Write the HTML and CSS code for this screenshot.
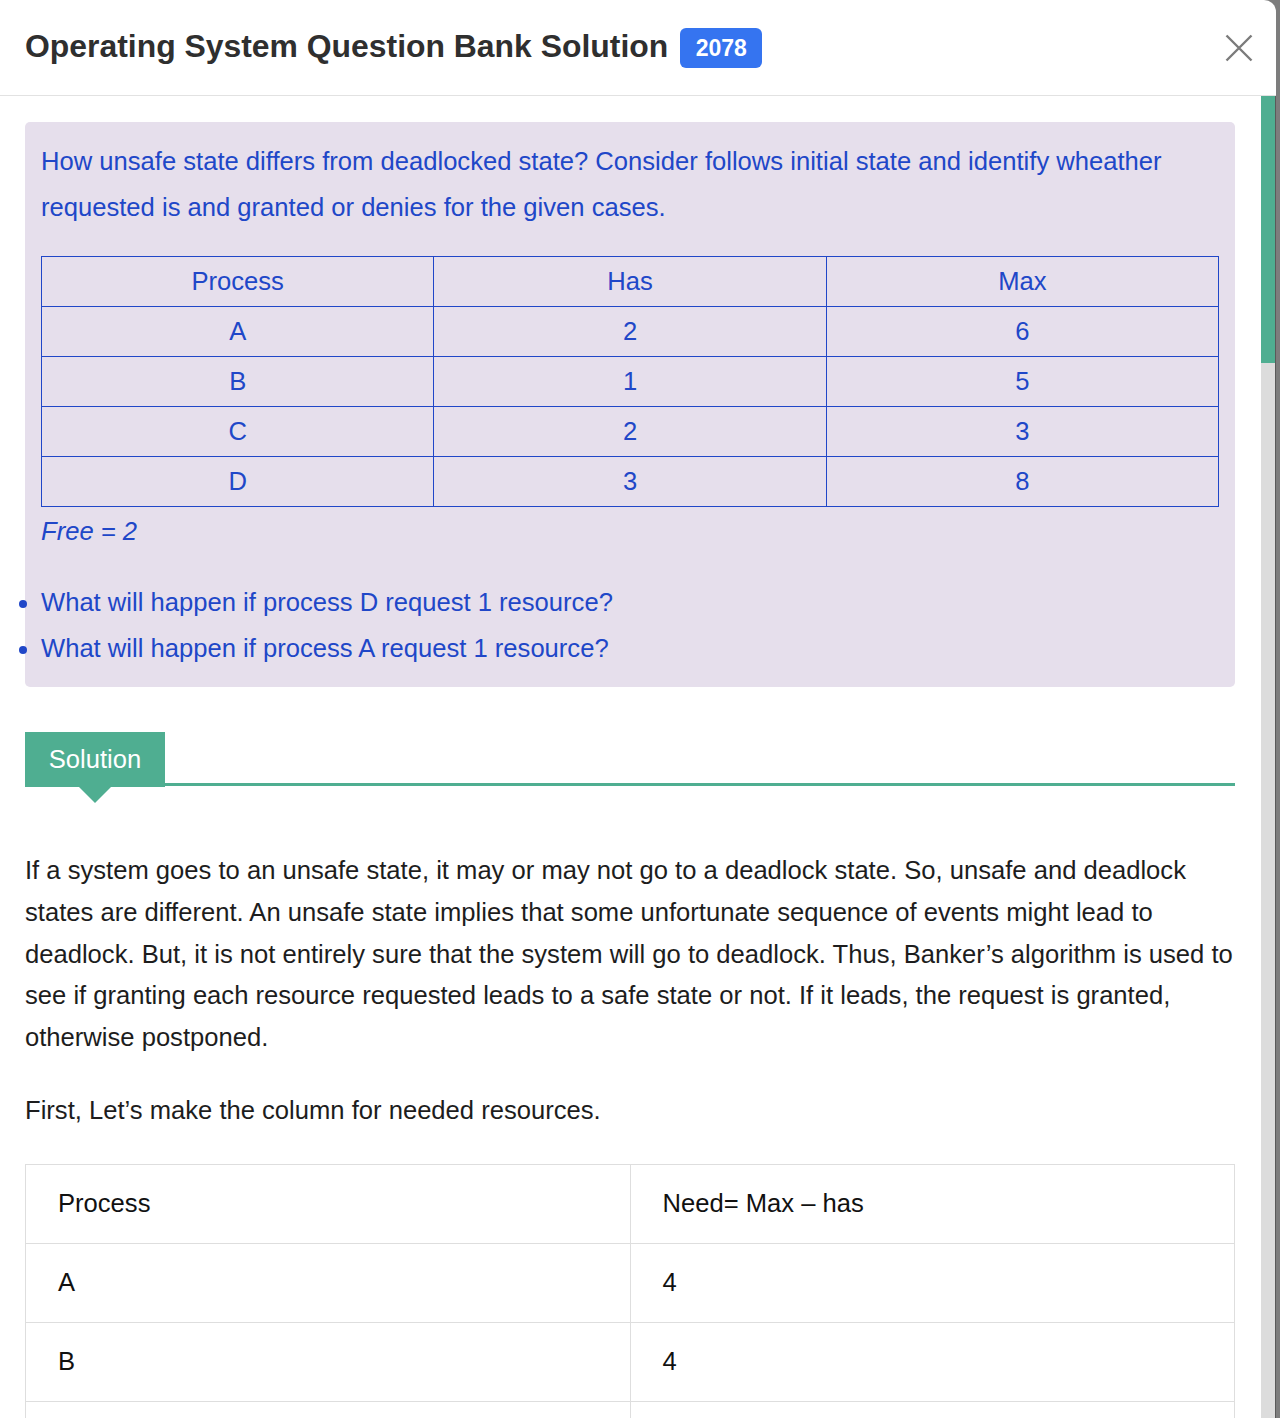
FILE: index.html
```html
<!DOCTYPE html>
<html lang="en">
<head>
<meta charset="utf-8">
<title>Operating System Question Bank Solution</title>
<link rel="stylesheet" href="styles.css">
</head>
<body>
<div class="modal">
  <header class="modal-header">
    <h1 class="title">Operating System Question Bank Solution <span class="badge">2078</span></h1>
    <button class="close" aria-label="Close">
      <svg width="28" height="28" viewBox="0 0 28 28"><path d="M1.5 1.5L26.5 26.5M26.5 1.5L1.5 26.5" stroke="#7b7b7b" stroke-width="2.4" fill="none"/></svg>
    </button>
  </header>
  <div class="modal-body">
    <div class="content">
      <div class="question">
        <p class="q-text">How unsafe state differs from deadlocked state? Consider follows initial state and identify wheather requested is and granted or denies for the given cases.</p>
        <table class="q-table">
          <tr><td>Process</td><td>Has</td><td>Max</td></tr>
          <tr><td>A</td><td>2</td><td>6</td></tr>
          <tr><td>B</td><td>1</td><td>5</td></tr>
          <tr><td>C</td><td>2</td><td>3</td></tr>
          <tr><td>D</td><td>3</td><td>8</td></tr>
        </table>
        <p class="free"><em>Free = 2</em></p>
        <ul class="q-list">
          <li>What will happen if process D request 1 resource?</li>
          <li>What will happen if process A request 1 resource?</li>
        </ul>
      </div>
      <div class="sol-head"><span class="sol-tab">Solution</span><span class="sol-line"></span></div>
      <p class="answer first">If a system goes to an unsafe state, it may or may not go to a deadlock state. So, unsafe and deadlock states are different. An unsafe state implies that some unfortunate sequence of events might lead to deadlock. But, it is not entirely sure that the system will go to deadlock. Thus, Banker’s algorithm is used to see if granting each resource requested leads to a safe state or not. If it leads, the request is granted, otherwise postponed.</p>
      <p class="answer">First, Let’s make the column for needed resources.</p>
      <table class="need">
        <tr><td>Process</td><td>Need= Max – has</td></tr>
        <tr><td>A</td><td>4</td></tr>
        <tr><td>B</td><td>4</td></tr>
        <tr><td>C</td><td>1</td></tr>
        <tr><td>D</td><td>5</td></tr>
      </table>
    </div>
    <div class="scrollbar"><div class="thumb"></div></div>
  </div>
</div>
</body>
</html>
```
FILE: styles.css
```css
html, body {
  margin: 0;
  height: 100%;
}
body {
  background: #7d7d7d;
  font-family: "Liberation Sans", Arial, Helvetica, sans-serif;
  overflow: hidden;
}
.modal {
  width: 1276px;
  height: 1418px;
  background: #fff;
  border-top-right-radius: 12px;
  display: flex;
  flex-direction: column;
  overflow: hidden;
}
.modal-header {
  height: 92px;
  flex-shrink: 0;
  border-bottom: 1px solid #e2e2e2;
  display: flex;
  align-items: center;
  justify-content: space-between;
  padding: 0 23px 3px 25px;
}
.title {
  margin: 0;
  font-size: 31.9px;
  font-weight: 700;
  color: #2f2f2f;
  display: flex;
  align-items: center;
  gap: 12px;
}
.badge {
  background: #3574f0;
  color: #fff;
  font-size: 23px;
  font-weight: 700;
  height: 40px;
  padding: 0 15.5px;
  border-radius: 6px;
  display: inline-flex;
  align-items: center;
  margin-top: 4px;
}
.close {
  background: none;
  border: 0;
  padding: 0;
  width: 28px;
  height: 28px;
  cursor: pointer;
  margin-top: 3px;
}
.close svg {
  display: block;
}
.modal-body {
  flex: 1;
  min-height: 0;
  display: flex;
}
.content {
  flex: 1;
  padding: 26px 26px 0 25px;
  overflow: hidden;
}
.scrollbar {
  width: 14px;
  flex-shrink: 0;
  background: #dcdcdc;
  border-right: 1px solid #5a5a5a;
}
.thumb {
  height: 267px;
  background: #4fae91;
}
.question {
  background: #e6dfec;
  border-radius: 5px;
  padding: 16px;
  color: #2047c8;
  font-size: 25.6px;
  line-height: 46px;
}
.q-text {
  margin: 0 0 26px;
}
.q-table {
  width: 100%;
  border-collapse: collapse;
  table-layout: fixed;
}
.q-table tr {
  height: 50px;
}
.q-table td {
  border: 1px solid #2047c8;
  text-align: center;
  padding: 0;
  line-height: 1.2;
}
.free {
  margin: 1px 0 0;
}
.q-list {
  margin: 25px 0 0;
  padding: 0;
  list-style: disc outside;
}
.sol-head {
  display: flex;
  align-items: flex-end;
  margin-top: 45px;
}
.sol-tab {
  position: relative;
  width: 140px;
  height: 55px;
  background: #4fae91;
  color: #fff;
  font-size: 25.6px;
  display: flex;
  align-items: center;
  justify-content: center;
}
.sol-tab::after {
  content: "";
  position: absolute;
  left: 50%;
  top: 100%;
  transform: translateX(-50%);
  border-left: 16px solid transparent;
  border-right: 16px solid transparent;
  border-top: 16px solid #4fae91;
}
.sol-line {
  flex: 1;
  height: 3px;
  margin-bottom: 1px;
  background: #4fae91;
}
.answer {
  font-size: 25.6px;
  line-height: 41.75px;
  color: #1d1d1d;
  margin: 0 0 32px;
}
.answer.first {
  margin-top: 63px;
  margin-bottom: 31px;
}
.need {
  width: 100%;
  border-collapse: collapse;
  table-layout: fixed;
}
.need tr {
  height: 79px;
}
.need td {
  border: 1px solid #dedede;
  padding: 0 32px;
  font-size: 25.6px;
  color: #111;
}
```
